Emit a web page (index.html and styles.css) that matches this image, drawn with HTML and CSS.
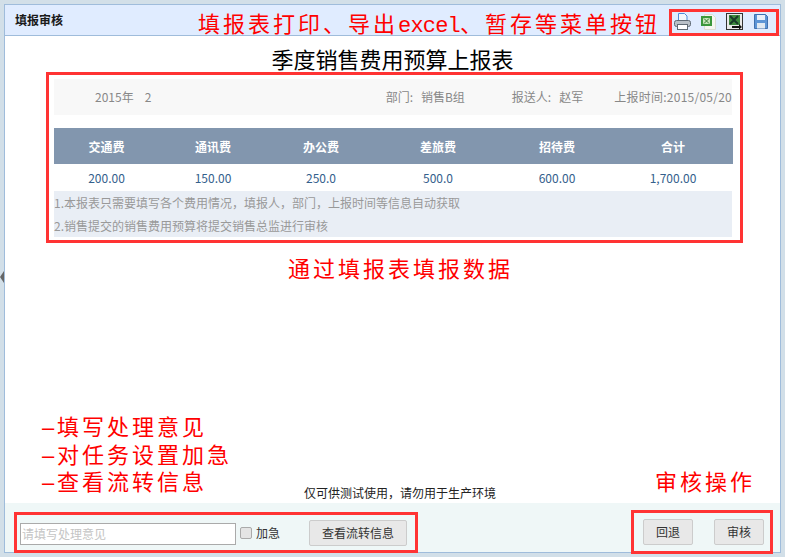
FILE: index.html
```html
<!DOCTYPE html>
<html lang="zh">
<head>
<meta charset="utf-8">
<title>填报审核</title>
<link rel="stylesheet" href="styles.css">
</head>
<body>
<span class="collapse-arrow"></span>
<div class="window">
  <header class="win-head">
    <span class="win-title">填报审核</span>
    <div class="tools">
      <svg class="tool" viewBox="0 0 17 17" width="17" height="17"><path d="M4.500.5h6l2.500 2.500v6h-8.500z" fill="#f2f7fd" stroke="#4f8ad6"/><rect x=".5" y="7.500" width="16" height="6" rx="2" fill="#b9c0c7" stroke="#5f6a74"/><rect x="3.500" y="11.500" width="10" height="5" fill="#fff" stroke="#5f6a74"/></svg>
      <svg class="tool" viewBox="0 0 17 17" width="17" height="17"><path d="M4.500 1.500h8l3 3v12h-11z" fill="#f6f6f0" stroke="#dcdcd4"/><rect x="1" y="3" width="11" height="10" fill="#3b973b"/><path d="M3 5h7v6H3z" fill="#c6e4b8"/><path d="M4 5.500l5 5M9 5.500l-5 5" stroke="#2c7a2c"/></svg>
      <svg class="tool" viewBox="0 0 17 17" width="17" height="17"><rect x=".5" y=".5" width="16" height="16" fill="#e9e9e9" stroke="#333"/><rect x="3" y="2" width="11" height="10" fill="#3f8a3f"/><path d="M4 3l8 8M12 3l-8 8" stroke="#1a3a2a" stroke-width="2"/><path d="M6 13h7v-2l3 3-3 2.500v-1.500H6z" fill="#111"/></svg>
      <svg class="tool" viewBox="0 0 17 17" width="17" height="17"><path d="M2.500 1.500h11l2 2v12h-13z" fill="#5c94d6" stroke="#3f6fae"/><rect x="5" y="2" width="8" height="5" fill="#e8f0fa"/><rect x="5" y="10" width="8" height="5.500" fill="#dfe8f2"/></svg>
    </div>
  </header>
  <main class="win-body">
    <h1 class="report-title">季度销售费用预算上报表</h1>
    <section class="report">
      <div class="meta">
        <span class="meta-period">2015年<span class="meta-num">2</span></span>
        <span class="meta-dept">部门:<span class="meta-val">销售B组</span></span>
        <span class="meta-person">报送人:<span class="meta-val">赵军</span></span>
        <span class="meta-time">上报时间:2015/05/20</span>
      </div>
      <table class="fees">
        <thead>
          <tr><th class="c1">交通费</th><th class="c2">通讯费</th><th class="c3">办公费</th><th class="c4">差旅费</th><th class="c5">招待费</th><th class="c6">合计</th></tr>
        </thead>
        <tbody>
          <tr><td>200.00</td><td>150.00</td><td>250.0</td><td>500.0</td><td>600.00</td><td>1,700.00</td></tr>
        </tbody>
      </table>
      <div class="notes">
        <p>1.本报表只需要填写各个费用情况，填报人，部门，上报时间等信息自动获取</p>
        <p>2.销售提交的销售费用预算将提交销售总监进行审核</p>
      </div>
    </section>
    <p class="env-note">仅可供测试使用，请勿用于生产环境</p>
  </main>
  <footer class="win-foot">
    <div class="foot-left">
      <input class="opinion" type="text" placeholder="请填写处理意见">
      <label class="urgent"><input class="check" type="checkbox">加急</label>
      <button class="btn btn-flow" type="button">查看流转信息</button>
    </div>
    <div class="foot-right">
      <button class="btn btn-act" type="button">回退</button>
      <button class="btn btn-act" type="button">审核</button>
    </div>
  </footer>
</div>

<div class="mark mark-tools"></div>
<div class="mark mark-report"></div>
<div class="mark mark-left"></div>
<div class="mark mark-right"></div>
<div class="note note-menu">填报表打印、导出<span class="latin">excel</span>、暂存等菜单按钮</div>
<div class="note note-fill">通过填报表填报数据</div>
<div class="note note-list">
  <div class="note-line"><span class="dash">–</span>填写处理意见</div>
  <div class="note-line"><span class="dash">–</span>对任务设置加急</div>
  <div class="note-line"><span class="dash">–</span>查看流转信息</div>
</div>
<div class="note note-audit">审核操作</div>
</body>
</html>
```
FILE: styles.css
```css
* { box-sizing: border-box; }
html, body { height: 100%; }
body {
  margin: 0;
  padding: 4px;
  height: 557px;
  overflow: hidden;
  position: relative;
  background: #d2dfe8;
  font: 12px "Noto Sans CJK SC", "Liberation Sans", sans-serif;
  color: #333;
}
.collapse-arrow {
  position: absolute;
  left: 0;
  top: 271px;
  border: 6px solid transparent;
  border-left-width: 0;
  border-right: 4px solid #666;
}
.window {
  height: 549px;
  border: 1px solid #9fbcdb;
  background: #fff;
  display: flex;
  flex-direction: column;
}
.win-head {
  height: 31px;
  flex: none;
  background: #e0ecff;
  border-bottom: 1px solid #9fbcdb;
  display: flex;
  align-items: center;
  justify-content: space-between;
  padding: 0 11px 0 10px;
}
.win-title { font-weight: bold; color: #1a1a1a; position: relative; top: -1px; }
.tools { display: flex; gap: 9px; align-items: center; margin-top: 2px; }
.tool { display: block; }
.win-body { flex: 1; display: flex; flex-direction: column; min-height: 0; }
.report-title {
  margin: 6px 0 0;
  height: 35px;
  text-align: center;
  font-size: 22px;
  line-height: 32px;
  font-weight: normal;
  color: #000;
}
.report { margin: 2px 48px 0 49px; color: #888; }
.meta {
  height: 36px;
  background: #f8f8f8;
  display: flex;
  align-items: center;
  padding: 0 0 2px 41px;
}
.meta-period { margin-right: auto; }
.meta-num { margin-left: 11px; }
.meta-val { margin-left: 8px; }
.meta-dept { margin-right: 47px; }
.meta-person { margin-right: 31px; }
.meta-time { letter-spacing: .25px; }
.fees {
  width: 679px;
  margin-top: 13px;
  border-collapse: collapse;
  table-layout: fixed;
}
.fees th {
  height: 36px;
  background: #8296ae;
  color: #fff;
  font-weight: bold;
  padding: 0;
}
.fees td {
  height: 27px;
  text-align: center;
  color: #34608c;
  padding: 0;
}
.c1 { width: 105px; }
.c2 { width: 108px; }
.c3 { width: 108px; }
.c4 { width: 126px; }
.c5 { width: 112px; }
.c6 { width: 120px; }
.notes { background: #e9eef5; height: 46px; color: #999; }
.notes p { margin: 0; line-height: 23px; }
.env-note {
  margin: auto 0 0;
  padding-left: 15px;
  text-align: center;
  color: #222;
  font-size: 12px;
  line-height: 20px;
}
.win-foot {
  height: 49px;
  flex: none;
  background: #eff7f7;
  display: flex;
  align-items: center;
  justify-content: space-between;
  padding: 10px 16px 0 15px;
}
.foot-left { display: flex; align-items: center; }
.opinion {
  width: 216px;
  height: 22px;
  margin-top: 2px;
  border: 1px solid #aaa;
  padding: 0 1px;
  background: #fff;
  font: 12px "Noto Sans CJK SC", sans-serif;
}
.opinion::placeholder { color: #c4c4c4; }
.urgent { display: flex; align-items: center; margin-left: 4px; color: #333; }
.check {
  appearance: none;
  margin: 0 4px 0 0;
  width: 12px;
  height: 12px;
  background: #e4e4e4;
  border: 1px solid #aaa;
  border-radius: 2px;
}
.btn {
  height: 26px;
  background: #e8e8e8;
  border: 1px solid #ccc;
  border-radius: 2px;
  font: 12px "Noto Sans CJK SC", sans-serif;
  color: #333;
  padding: 0;
}
.btn-flow { width: 98px; margin-left: 29px; }
.foot-right { display: flex; gap: 21px; margin-bottom: 2px; }
.btn-act { width: 50px; }

.mark { position: absolute; border: 3px solid #f33; }
.mark-tools { left: 669px; top: 9px; width: 110px; height: 27px; }
.mark-report { left: 46px; top: 72px; width: 697px; height: 171px; }
.mark-left { left: 14px; top: 512px; width: 404px; height: 41px; }
.mark-right { left: 631px; top: 510px; width: 142px; height: 44px; }

.note {
  position: absolute;
  color: #f00;
  font-family: "Noto Sans CJK SC", serif;
  font-size: 22px;
  letter-spacing: 3px;
  white-space: nowrap;
}
.latin { font-family: "Liberation Mono", monospace; letter-spacing: -.8px; }
.note-menu { left: 198px; top: 6px; line-height: 32px; }
.note-fill { left: 288px; top: 251px; line-height: 32px; }
.note-list {
  left: 42px;
  top: 414px;
  font-family: "Liberation Sans", "Noto Sans CJK SC", sans-serif;
}
.note-line { height: 27.500px; line-height: 27.500px; }
.dash { display: inline-block; width: 15px; }
.note-audit { left: 655px; top: 464px; line-height: 32px; }
```
